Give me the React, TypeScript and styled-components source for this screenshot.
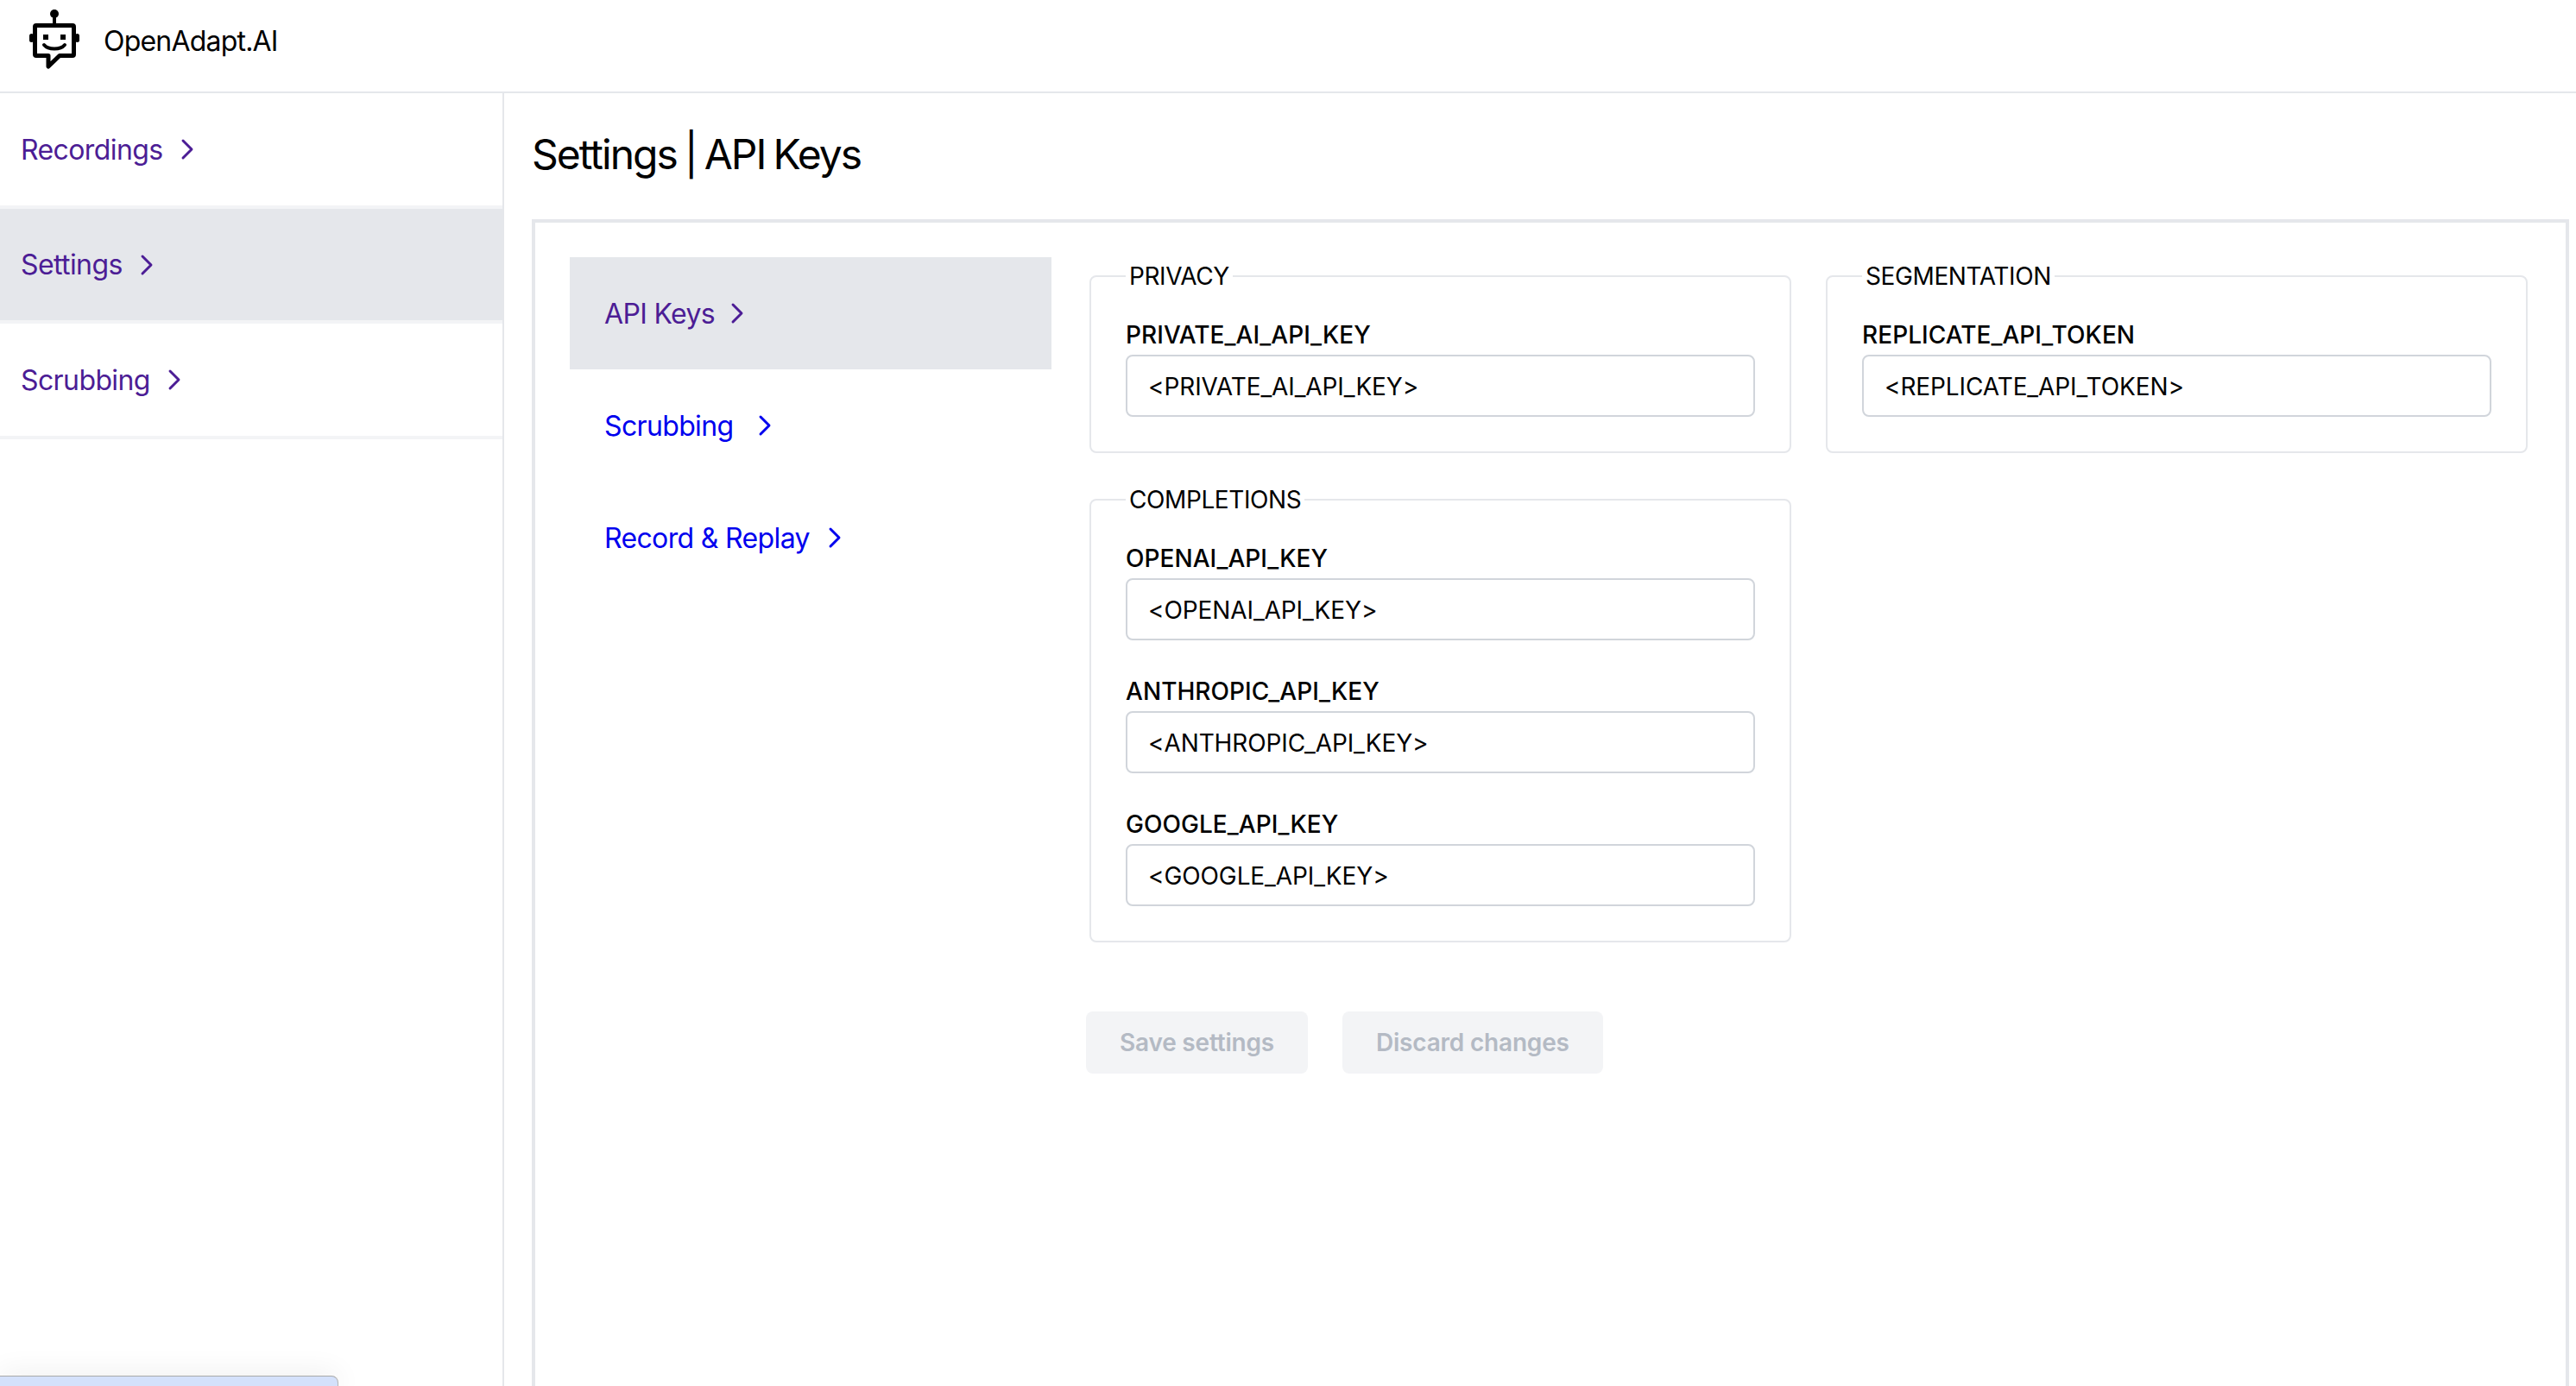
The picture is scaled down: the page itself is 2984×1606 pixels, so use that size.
import React from 'react';
import styled, { createGlobalStyle } from 'styled-components';
import { HiOutlineChevronRight } from 'react-icons/hi2';

const GlobalStyle = createGlobalStyle`
    html, body {
        margin: 0;
        height: 100%;
        background: #fff;
        overflow: hidden;
    }
    * {
        box-sizing: border-box;
    }
    body {
        font-family: Inter, 'Liberation Sans', sans-serif;
        color: #000;
    }
`;

const Logo = () => (
    <svg width="64" height="80" viewBox="0 0 64 80" fill="none">
        <circle cx="31" cy="16" r="5" fill="#000" />
        <path d="M31 18V28" stroke="#000" strokeWidth="4" />
        <path
            d="M10 29.5H52a1.5 1.5 0 0 1 1.5 1.5V63a1.5 1.5 0 0 1-1.5 1.5H37L24 77V64.5H10A1.5 1.5 0 0 1 8.5 63V31A1.5 1.5 0 0 1 10 29.5Z"
            stroke="#000"
            strokeWidth="5"
            strokeLinejoin="round"
        />
        <rect x="2" y="39" width="5" height="10" rx="2.5" fill="#000" />
        <rect x="55" y="39" width="5" height="10" rx="2.5" fill="#000" />
        <rect x="18" y="40" width="6" height="6" fill="#000" />
        <rect x="38" y="40" width="6" height="6" fill="#000" />
        <path d="M19 52C24 58 38 58 43 52" stroke="#000" strokeWidth="4" strokeLinecap="round" />
    </svg>
);

const sideLinks = [
    { label: 'Recordings' },
    { label: 'Settings', active: true },
    { label: 'Scrubbing' },
];

const subLinks = [
    { label: 'API Keys', active: true, gap: 10 },
    { label: 'Scrubbing', gap: 21 },
    { label: 'Record & Replay', gap: 13 },
];

const groups = [
    { title: 'PRIVACY', keys: ['PRIVATE_AI_API_KEY'] },
    { title: 'SEGMENTATION', keys: ['REPLICATE_API_TOKEN'] },
    { title: 'COMPLETIONS', keys: ['OPENAI_API_KEY', 'ANTHROPIC_API_KEY', 'GOOGLE_API_KEY'] },
];

export default function App() {
    return (
        <Page>
            <GlobalStyle />
            <Header>
                <Logo />
                <Brand>OpenAdapt.AI</Brand>
            </Header>
            <Body>
                <Sidebar>
                    {sideLinks.map((link) => (
                        <SideLink key={link.label} $active={link.active}>
                            {link.label}
                            <Chevron strokeWidth={2.2} />
                        </SideLink>
                    ))}
                </Sidebar>
                <Main>
                    <Title>Settings | API Keys</Title>
                    <Card>
                        <SubNav>
                            {subLinks.map((link) => (
                                <SubLink key={link.label} $active={link.active} $gap={link.gap}>
                                    {link.label}
                                    <Chevron strokeWidth={2.2} />
                                </SubLink>
                            ))}
                        </SubNav>
                        <Content>
                            <Groups>
                                {groups.map((group) => (
                                    <Group key={group.title}>
                                        <Legend>{group.title}</Legend>
                                        {group.keys.map((key) => (
                                            <Field key={key}>
                                                <FieldLabel>{key}</FieldLabel>
                                                <KeyInput placeholder={`<${key}>`} />
                                            </Field>
                                        ))}
                                    </Group>
                                ))}
                            </Groups>
                            <Actions>
                                <ActionButton disabled>Save settings</ActionButton>
                                <ActionButton disabled>Discard changes</ActionButton>
                            </Actions>
                        </Content>
                    </Card>
                </Main>
            </Body>
            <DockedBar />
        </Page>
    );
}

const Page = styled.div`
    display: flex;
    flex-direction: column;
    width: 100%;
    height: 1606px;
    overflow: hidden;
`;

const Header = styled.header`
    display: flex;
    align-items: center;
    gap: 24px;
    height: 108px;
    padding: 0 0 26px 32px;
    border-bottom: 2px solid #e5e7eb;
    flex-shrink: 0;
`;

const Brand = styled.span`
    font-size: 32px;
    line-height: 48px;
    letter-spacing: -0.8px;
    margin-top: 16px;
`;

const Body = styled.div`
    display: flex;
    flex: 1;
    min-height: 0;
`;

const Sidebar = styled.nav`
    width: 584px;
    flex-shrink: 0;
    border-right: 2px solid #e5e7eb;
`;

const SideLink = styled.a<{ $active?: boolean }>`
    display: flex;
    align-items: center;
    height: 133.4px;
    padding-left: 24px;
    font-size: 32px;
    letter-spacing: -0.6px;
    color: #4c1d95;
    border-bottom: 4px solid #f3f4f6;
    background: ${(p) => (p.$active ? '#e5e7eb' : 'transparent')};

    &:first-child {
        height: 134px;
    }
`;

const Chevron = styled(HiOutlineChevronRight)`
    width: 32px;
    height: 32px;
    margin-left: 12px;
`;

const Main = styled.main`
    flex: 1;
    min-width: 0;
    display: flex;
    flex-direction: column;
    padding: 35px 8px 0 32px;
`;

const Title = styled.h1`
    margin: 0 0 39px;
    font-size: 48px;
    line-height: 72px;
    font-weight: 400;
    letter-spacing: -2px;
    word-spacing: -2.5px;
`;

const Card = styled.section`
    flex: 1;
    display: flex;
    gap: 40px;
    padding: 40px;
    border: 4px solid #e5e7eb;
    border-bottom: none;
`;

const SubNav = styled.nav`
    width: 558px;
    flex-shrink: 0;
`;

const SubLink = styled.a<{ $active?: boolean; $gap: number }>`
    display: flex;
    align-items: center;
    height: 130px;
    padding-left: 40px;
    font-size: 32px;
    letter-spacing: -0.65px;
    color: ${(p) => (p.$active ? '#4c1d95' : '#0000ee')};
    background: ${(p) => (p.$active ? '#e5e7eb' : 'transparent')};

    svg {
        margin-left: ${(p) => p.$gap}px;
    }
`;

const Content = styled.div`
    flex: 1;
    min-width: 0;
    padding-top: 2px;
`;

const Groups = styled.div`
    display: grid;
    grid-template-columns: 1fr 1fr;
    align-items: start;
    column-gap: 40px;
    row-gap: 34px;
    margin: 0 4px;
`;

const Group = styled.fieldset`
    min-width: 0;
    margin: 0;
    padding: 28px 40px 40px;
    border: 2px solid #e5e7eb;
    border-radius: 8px;
    display: flex;
    flex-direction: column;
    gap: 39px;
`;

const Legend = styled.legend`
    margin-left: 0;
    padding: 0 4px;
    font-size: 28px;
    line-height: 40px;
    letter-spacing: -0.4px;
`;

const Field = styled.div`
    display: flex;
    flex-direction: column;
`;

const FieldLabel = styled.label`
    font-size: 28px;
    font-weight: 500;
    line-height: 40px;
    letter-spacing: 0.05px;
    margin-bottom: 3px;
`;

const KeyInput = styled.input`
    height: 72px;
    padding: 2px 24px 0;
    border: 2px solid #d1d5db;
    border-radius: 8px;
    font: inherit;
    font-size: 28px;
    letter-spacing: -0.1px;
    background: #fff;
    outline: none;

    &::placeholder {
        color: #000;
        opacity: 1;
    }
`;

const Actions = styled.div`
    display: flex;
    gap: 40px;
    margin-top: 80px;
`;

const ActionButton = styled.button`
    height: 72px;
    padding: 0 39px;
    border: none;
    border-radius: 8px;
    background: #f3f4f6;
    color: #b4bac4;
    font: inherit;
    font-size: 28px;
    font-weight: 600;
    letter-spacing: -0.2px;
`;

const DockedBar = styled.div`
    position: fixed;
    left: 0;
    bottom: 0;
    width: 392px;
    height: 12px;
    background: #d4e1fb;
    border-top: 1px solid #a9a9a9;
    border-right: 1px solid #b5b5b5;
    border-top-right-radius: 8px;
    box-shadow: 0 0 32px rgba(0, 0, 0, 0.12);
`;
